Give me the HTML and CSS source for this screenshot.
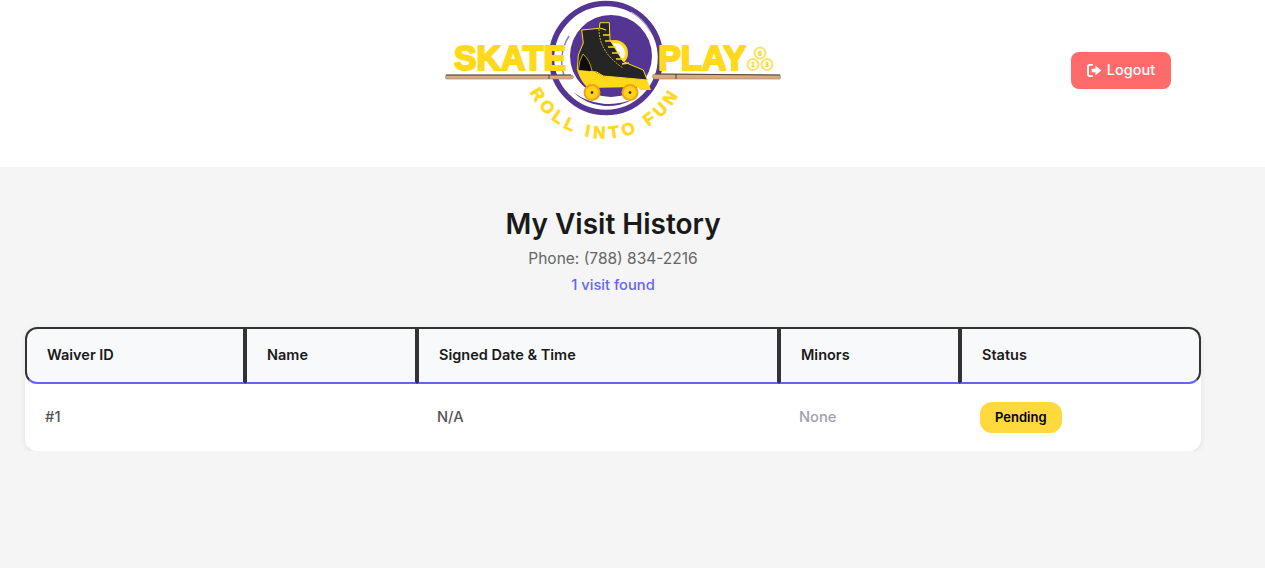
FILE: index.html
```html
<!DOCTYPE html>
<html lang="en">
<head>
<meta charset="utf-8">
<title>My Visit History</title>
<link rel="stylesheet" href="styles.css">
</head>
<body>
<header class="site-header">
  <svg class="logo" viewBox="0 0 336 167" width="336" height="167" role="img" aria-label="Skate and Play logo">
    <defs>
      <path id="rollArc" d="M80 80 A84 84 0 0 0 240 80"/>
    </defs>
    <circle cx="161" cy="58" r="54.500" fill="#fff" stroke="#553592" stroke-width="5.500"/>
    <circle cx="166" cy="56" r="41" fill="#553592"/>
    <path d="M127 40 A44 44 0 0 0 134 92 A40 40 0 0 0 178 99 L176 96 A40 40 0 0 1 136 84 A42 42 0 0 1 127 40Z" fill="#fff"/>
    <path d="M128 92 A50 50 0 0 0 190 98 A60 60 0 0 1 128 92Z" fill="#553592"/>
    <path d="M186 12 A50 50 0 0 1 205 31" fill="none" stroke="#b9a9d6" stroke-width="1.200"/>
    <path d="M124 36 A46 46 0 0 0 120 78" fill="none" stroke="#8d76ba" stroke-width="1.400"/>
    <circle cx="170" cy="53" r="11.500" fill="#fff" stroke="#ffd91a" stroke-width="3"/>
    <text class="logo-word" x="9" y="70" textLength="112" lengthAdjust="spacingAndGlyphs">SKATE</text>
    <text class="logo-word" x="213" y="70" textLength="88" lengthAdjust="spacingAndGlyphs">PLAY</text>
    <g class="ball">
      <circle cx="315" cy="53" r="5.500"/><circle cx="308" cy="64.500" r="5.500"/><circle cx="322" cy="64.500" r="5.500"/>
    </g>
    <g class="ball-num">
      <text x="315" y="55.500">6</text><text x="308" y="67">1</text><text x="322" y="67">3</text>
    </g>
    <path d="M132 70 L150 72 L158 76 L202 80 L206 90 L196 90 L192 87 L143 88 Q136 82 132 70Z" fill="#ffd91a"/>
    <path d="M136.700 30 L154.300 28.300 L155 22.700 L164.300 22.700 L165 40 L178.300 61.700 L198.300 70 L202.300 80 L158.300 76 L151.700 72 L132.300 70 L133.300 55 L138.300 43Z" fill="#262525" stroke="#ffd91a" stroke-width="1" stroke-linejoin="round"/>
    <path d="M133.500 70 Q134 60 138 54 Q145 60 147 71" fill="#0d0d0d" stroke="#ffd91a" stroke-width=".7"/>
    <path d="M155 28 L161 30 M158 35 L165 35 M160 41 L168 41 M163 47 L171 47 M167 53 L175 53 M171 59 L179 59 M177 64 L184 63" stroke="#ffd91a" stroke-width="1.300" fill="none"/>
    <path d="M154 29 Q154 52 178 68" stroke="#ffd91a" stroke-width=".8" fill="none" stroke-dasharray="2 1"/>
    <g class="wheel"><circle cx="147" cy="92.500" r="7.500"/><circle cx="185" cy="92.500" r="7.500"/></g>
    <circle cx="147" cy="92.500" r="1.300" fill="#2a1a00"/><circle cx="185" cy="92.500" r="1.300" fill="#2a1a00"/>
    <path class="cue" d="M1 75 H126 Q128.500 75 128.500 77 Q128.500 79 126 79 H1 Q0 77 1 75Z"/>
    <path class="cue" d="M210 74 Q207.500 74 207.500 76.500 Q207.500 79 210 79 H335 Q336 77 335 75Z"/>
    <path class="cue-line" d="M1 75 H126 M104 75 V79 M210 74 L335 75 M231 74 V79"/>
    <text class="logo-arc"><textPath href="#rollArc" startOffset="50%" text-anchor="middle">ROLL INTO FUN</textPath></text>
  </svg>
  <button class="logout" type="button">
    <svg class="logout-icon" viewBox="0 0 16 14" width="15" height="13" aria-hidden="true">
      <path d="M5.500 1 H3 A2 2 0 0 0 1 3 V11 A2 2 0 0 0 3 13 H5.500" fill="none" stroke="currentColor" stroke-width="2" stroke-linecap="round"/>
      <path d="M5 5 H9 V2 L15.500 7 L9 12 V9 H5Z" fill="currentColor"/>
    </svg>
    <span class="logout-label">Logout</span>
  </button>
</header>
<main class="content">
  <h1 class="title">My Visit History</h1>
  <p class="phone">Phone: (788) 834-2216</p>
  <p class="count">1 visit found</p>
  <div class="card">
    <table class="visits">
      <colgroup>
        <col class="col-id"><col class="col-name"><col class="col-date"><col class="col-minors"><col class="col-status">
      </colgroup>
      <thead>
        <tr>
          <th>Waiver ID</th>
          <th>Name</th>
          <th>Signed Date &amp; Time</th>
          <th>Minors</th>
          <th>Status</th>
        </tr>
      </thead>
      <tbody>
        <tr>
          <td class="cell-id">#1</td>
          <td></td>
          <td>N/A</td>
          <td class="cell-none">None</td>
          <td class="cell-status"><span class="badge">Pending</span></td>
        </tr>
      </tbody>
    </table>
  </div>
</main>
</body>
</html>
```

FILE: styles.css
```css
* { box-sizing: border-box; }
html, body { margin: 0; padding: 0; }
body {
  background: #f5f5f5;
  font-family: Inter, "Open Sans", "Liberation Sans", sans-serif;
  color: #1a1a1a;
}
.site-header {
  height: 167px;
  background: #fff;
  display: grid;
  grid-template-columns: 1fr auto 1fr;
  align-items: start;
  padding: 0 94px 0 55px;
}
.logo { grid-column: 2; display: block; }
.logo-word {
  font-family: "Liberation Sans", sans-serif;
  font-weight: 700;
  font-size: 35px;
  fill: #ffd91a;
  stroke: #ffd91a;
  stroke-width: 2.200px;
  stroke-linejoin: round;
}
.logo-arc {
  font-family: "Liberation Sans", sans-serif;
  font-weight: 700;
  font-size: 17px;
  letter-spacing: 4.200px;
  fill: #ffd91a;
  stroke: #ffd91a;
  stroke-width: .7px;
}
.ball circle { fill: #fffbe0; stroke: #f8e46a; stroke-width: 2px; }
.ball-num text {
  font-family: "Liberation Sans", sans-serif;
  font-size: 7px;
  font-weight: 700;
  fill: #e8c93a;
  text-anchor: middle;
}
.wheel circle { fill: #ffd21a; stroke: #f2a112; stroke-width: 2px; }
.cue { fill: #dfa878; stroke: #8a8580; stroke-width: .6px; }
.cue-line { fill: none; stroke: #3d3a37; stroke-width: .9px; }
.logout {
  grid-column: 3;
  justify-self: end;
  margin-top: 52px;
  width: 100px;
  height: 37px;
  border: 0;
  border-radius: 8px;
  background: #ff6b6b;
  color: #fff;
  font: 500 14.500px Inter, "Open Sans", sans-serif;
  display: flex;
  align-items: center;
  justify-content: center;
  gap: 5px;
}
.logout-label { padding-bottom: 2px; }
.content {
  width: 1176px;
  margin-left: 25px;
  padding-top: 39px;
  text-align: center;
}
.title {
  margin: 0;
  font-size: 28px;
  line-height: 36px;
  font-weight: 600;
  color: #1a1a1a;
}
.phone {
  margin: 6px 0 0;
  font-size: 15.500px;
  line-height: 22px;
  color: #666;
}
.count {
  margin: 5px 0 0;
  font-size: 14.700px;
  line-height: 20px;
  font-weight: 500;
  color: #6366f1;
}
.card {
  margin-top: 32px;
  background: #fff;
  border-radius: 12px;
  box-shadow: 0 2px 6px rgba(0, 0, 0, .08);
}
.visits {
  width: 100%;
  table-layout: fixed;
  border-collapse: separate;
  border-spacing: 0;
  text-align: left;
}
.col-id { width: 220px; }
.col-name { width: 172px; }
.col-date { width: 362px; }
.col-minors { width: 181px; }
.col-status { width: 241px; }
.visits th {
  height: 57px;
  padding: 0 20px 2px;
  background: #f8f9fa;
  border: 2px solid #333;
  border-bottom-color: #6366f1;
  font-size: 14.500px;
  font-weight: 600;
  color: #1a1a1a;
}
.visits th:first-child { border-radius: 12px 0 0 12px; }
.visits th:last-child { border-radius: 0 12px 12px 0; }
.visits td {
  height: 67px;
  padding: 0 20px 2px;
  font-size: 14.700px;
  font-weight: 500;
  color: #555;
}
.visits .cell-status { padding-bottom: 0; }
.visits .cell-none { color: #a0a0b0; }
.badge {
  display: inline-block;
  padding: 0 15px;
  height: 31px;
  line-height: 31px;
  border-radius: 12px;
  background: #ffd93d;
  color: #000;
  font-size: 13px;
  font-weight: 600;
}
```
